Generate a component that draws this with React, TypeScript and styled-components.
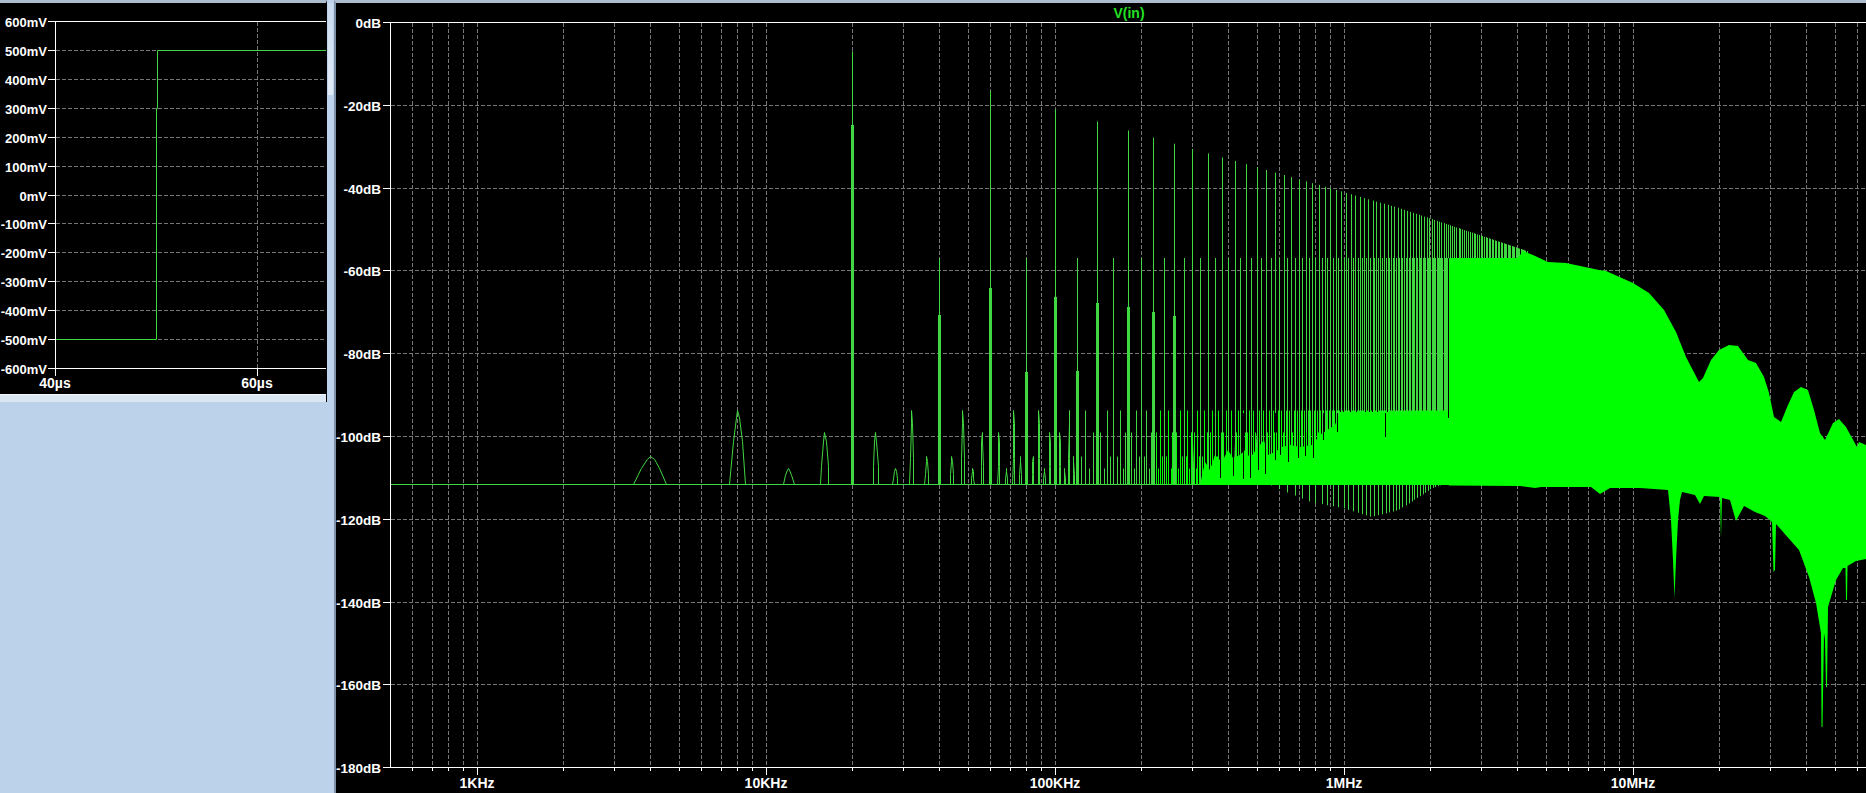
import styled, { createGlobalStyle } from "styled-components";

const GlobalStyle = createGlobalStyle`
  html, body, #root {
    margin: 0;
    height: 100%;
  }
  body {
    overflow: hidden;
    background: #bbd2ea;
  }
`;

const Page = styled.div`
  display: flex;
  height: 793px;
  width: 1866px;
  overflow: hidden;
  background: #bbd2ea;
`;

const LeftColumn = styled.div`
  width: 327px;
  flex: none;
`;

const PlotWindow = styled.div`
  border-top: 3px solid #aebccf;
  border-right: 1px solid #000;
`;

const StatusBand = styled.div`
  height: 7px;
  border-top: 1px solid #f4f8fc;
  background: #dbe6f3;
`;

const Gutter = styled.div`
  width: 7px;
  flex: none;
  background: #bdd3ec;
`;

const GutterThumb = styled.div`
  height: 92px;
  margin-top: 3px;
  margin-left: 1px;
  width: 5px;
  background: linear-gradient(#c9dbf0, #e2ecf7);
`;

const SpectrumWindow = styled.div`
  flex: 1;
  border-top: 3px solid #aebccf;
  border-left: 2px solid #7f91a6;
  background: #000;
`;

const PlotSvg = styled.svg`
  display: block;
  background: #000;
`;

const GridPath = styled.path`
  fill: none;
  stroke: #777;
  stroke-width: 1;
  stroke-dasharray: 4 2;
`;

const AxisPath = styled.path`
  fill: none;
  stroke: #fff;
  stroke-width: 1;
`;

const TracePath = styled.path<{ $bright?: boolean; $width?: number }>`
  fill: none;
  stroke: ${({ $bright }) => ($bright ? "#00ff00" : "#40d840")};
  stroke-width: ${({ $width }) => $width ?? 1};
`;

const FillShape = styled.path`
  fill: #00ff00;
`;

const CutPath = styled.path`
  fill: none;
  stroke: #000;
  stroke-width: 1;
`;

const AxisText = styled.text<{ $anchor?: string; $size?: number }>`
  font-family: "Liberation Sans", Arial, sans-serif;
  font-size: ${({ $size }) => $size ?? 14}px;
  font-weight: 700;
  fill: #fff;
  text-anchor: ${({ $anchor }) => $anchor ?? "end"};
`;

const TraceTitle = styled.text`
  font-family: "Liberation Sans", Arial, sans-serif;
  font-size: 14px;
  font-weight: 700;
  fill: #22e022;
  text-anchor: middle;
`;

// time plot, left window
const mvLabels = [600, 500, 400, 300, 200, 100, 0, -100, -200, -300, -400, -500, -600];
const mvY = [21.5, 50.5, 79.5, 108.5, 137.5, 166.5, 195.5, 223.5, 252.5, 281.5, 310.5, 339.5, 368.5];

const timeGrid =
  mvY.slice(1, -1).map((y) => `M56 ${y}H326`).join("") + "M257.5 22V368";
const timeAxis =
  "M55.5 21.5V376M257.5 368V376" + mvY.map((y) => `M48 ${y}H${y === 21.5 || y === 368.5 ? 326 : 55}`).join("");
const timeTrace = "M56 339.5H156.5V108.5H157.5V50.5H326";

// spectrum plot, right window
const fx = (f: number) => 477 + 289 * Math.log10(f / 1000);
const dbY = (db: number) => Math.floor(22.5 + -db * 4.14) + 0.5;
const snap = (x: number) => Math.round(x - 0.5) + 0.5;

const dbLabels = [0, -20, -40, -60, -80, -100, -120, -140, -160, -180];
const FLOOR = 484.5;

const decades = [1e2, 1e3, 1e4, 1e5, 1e6, 1e7];
const freqs: { f: number; major: boolean }[] = [];
decades.forEach((d) => {
  for (let m = 2; m <= 10; m++) {
    const f = d * m;
    if (f > 500 && f <= 6e7) freqs.push({ f, major: m === 10 });
  }
});

const specGrid =
  dbLabels.slice(1, -1).map((db) => `M391 ${dbY(db)}H1866`).join("") +
  freqs.map(({ f }) => `M${snap(fx(f))} 23V767`).join("");

const specAxis =
  "M390.5 22.5V767.5M383 22.5H1866M383 767.5H1866" +
  dbLabels.map((db) => `M383 ${dbY(db)}H390`).join("") +
  freqs.map(({ f, major }) => `M${snap(fx(f))} 767V${major ? 775 : 771}`).join("");

// level of the small peaks, by 4kHz harmonic number modulo 10
const lowTops: Record<number, number> = {
  1: 456.5, 2: 410.5, 3: 468.5, 4: 432.5, 6: 432.5, 7: 468.5, 8: 410.5, 9: 456.5,
};
// where the main stems get thicker
const shoulders: Record<number, number> = {
  5: 125, 10: 315, 15: 288, 20: 372, 25: 297, 30: 371, 35: 303, 45: 307, 55: 312, 65: 316,
};

const lowerEdge = (x: number) => {
  const pts = [[1270, 485], [1311, 502], [1343, 508], [1372, 517], [1399, 510], [1433, 488], [1442, 485]];
  for (let i = 1; i < pts.length; i++) {
    if (x <= pts[i][0]) {
      const t = (x - pts[i - 1][0]) / (pts[i][0] - pts[i - 1][0]);
      return pts[i - 1][1] + t * (pts[i][1] - pts[i - 1][1]);
    }
  }
  return 485;
};

const roundPeak = [
  [-510, 0], [-437, 0.35], [-194, 0.82], [0, 1], [194, 0.82], [437, 0.35], [510, 0],
];
const slopedPeak = [
  [-510, 0], [-280, 0.58], [-100, 0.9], [0, 1], [100, 0.9], [280, 0.58], [510, 0],
];

const peak = (f: number, top: number, shape = roundPeak) => {
  const h = FLOOR - top;
  return shape.map(([df, a], i) => `${i ? "L" : "M"}${snap(fx(f + df))} ${(FLOOR - h * a).toFixed(1)}`).join("");
};

function buildSpectrum() {
  let main = "M391 484.5H1450";
  let bright = "";
  let thick = "";
  for (let k = 1; k <= 1075; k++) {
    const f = k * 4000;
    const x = fx(f);
    const r = k % 10;
    if (r === 0 || r === 5) {
      if (r === 0 && x > 1449) continue;
      const sh = shoulders[k];
      if (sh) thick += `M${snap(x)} ${FLOOR}V${sh}`;
      else if (r === 5 && x < 1260) main += peak(f, 432.5);
    }
    if (r === 5) {
      const n = k / 5;
      const extra = x > 1398 ? ((x - 1398) / 125) * 1.5 : 0;
      const top = 22.5 + (7 + 20 * Math.log10(n) + extra) * 4.14;
      main += `M${snap(x)} ${FLOOR}V${top.toFixed(1)}`;
    } else if (r === 0) {
      if (x > 1449) continue;
      main += `M${snap(x)} ${FLOOR}V258`;
      if (x > 1270) main += `M${snap(x)} ${FLOOR}V${lowerEdge(x).toFixed(1)}`;
    } else if (x < 1449) {
      if (f < 120000) main += peak(f, lowTops[r], k < 4 ? slopedPeak : roundPeak);
      else if (f < 220000) main += `M${snap(x)} ${FLOOR}V${lowTops[r]}`;
      else bright += `M${snap(x)} ${FLOOR}V${lowTops[r]}`;
    }
  }
  return { main, bright, thick };
}

const spectrum = buildSpectrum();

const toPath = (pts: number[][]) => pts.map(([x, y], i) => `${i ? "L" : "M"}${x} ${y}`).join("") + "Z";

const lowFill = toPath([
  [1200, 485], [1205, 462], [1210, 470], [1215, 455], [1222, 462], [1228, 450], [1233, 458], [1240, 455],
  [1245, 450], [1250, 458], [1258, 447], [1264, 440], [1268, 455], [1275, 452], [1282, 447], [1290, 445],
  [1300, 447], [1312, 445], [1320, 435], [1327, 430], [1335, 425], [1340, 412], [1449, 412], [1449, 485],
]);

const lowCuts = [
  [1220, 478], [1233, 476], [1243, 479], [1250, 478], [1258, 470], [1265, 474], [1275, 460], [1280, 455],
  [1288, 462], [1298, 458], [1305, 456], [1313, 458], [1323, 440], [1337, 432], [1385, 437],
]
  .map(([x, y]) => `M${x + 0.5} 413V${y}`)
  .join("");

const bigFill = toPath([
  [1449, 258], [1518, 258], [1523, 251], [1533, 255], [1548, 262], [1566, 263], [1599, 270], [1606, 271],
  [1633, 283], [1649, 293], [1664, 310], [1676, 332], [1686, 357], [1699, 382], [1703, 378], [1711, 360],
  [1719, 350], [1729, 345], [1738, 346], [1748, 360], [1756, 363], [1764, 377], [1769, 393], [1774, 417],
  [1781, 422], [1788, 405], [1794, 392], [1801, 387], [1808, 390], [1814, 410], [1820, 433], [1825, 440],
  [1833, 423], [1839, 419], [1846, 427], [1857, 447], [1859, 442], [1866, 445],
  [1866, 559], [1856, 561], [1847.5, 566], [1847, 600], [1846, 600], [1845.5, 568], [1843, 568], [1836, 580],
  [1828, 607], [1827, 687], [1826, 687], [1825, 640], [1824, 633], [1822.5, 727], [1821.5, 727], [1821, 633],
  [1816, 603], [1809, 577], [1799, 550], [1776, 524], [1775, 570], [1773.5, 572], [1772, 522], [1765, 516],
  [1755, 512], [1744, 506], [1736, 521], [1730, 500], [1722, 498], [1721, 538], [1720, 497], [1704, 496],
  [1700, 504], [1695, 495], [1682, 492], [1680, 500], [1678, 520], [1676, 560], [1674.5, 598], [1673, 560],
  [1671, 520], [1668, 490], [1640, 488], [1610, 488], [1600, 494], [1591, 487], [1541, 487], [1535, 488],
  [1520, 486], [1449, 485.5],
]);

const freqLabels = [
  { f: 1e3, text: "1KHz" },
  { f: 1e4, text: "10KHz" },
  { f: 1e5, text: "100KHz" },
  { f: 1e6, text: "1MHz" },
  { f: 1e7, text: "10MHz" },
];

function App() {
  return (
    <>
      <GlobalStyle />
      <Page>
        <LeftColumn>
          <PlotWindow>
            <PlotSvg width={326} height={391} viewBox="0 3 326 391">
              <GridPath d={timeGrid} />
              <AxisPath d={timeAxis} />
              <TracePath d={timeTrace} />
              {mvLabels.map((mv, i) => (
                <AxisText key={mv} $size={13} x={47} y={mvY[i] + 5}>
                  {mv}mV
                </AxisText>
              ))}
              <AxisText $anchor="middle" x={55} y={388}>
                40µs
              </AxisText>
              <AxisText $anchor="middle" x={257} y={388}>
                60µs
              </AxisText>
            </PlotSvg>
            <StatusBand />
          </PlotWindow>
        </LeftColumn>
        <Gutter>
          <GutterThumb />
        </Gutter>
        <SpectrumWindow>
          <PlotSvg width={1530} height={790} viewBox="336 3 1530 790">
            <GridPath d={specGrid} />
            <AxisPath d={specAxis} />
            <TracePath $width={3} d={spectrum.thick} />
            <TracePath d={spectrum.main} />
            <TracePath $bright d={spectrum.bright} />
            <FillShape d={lowFill} />
            <FillShape d={bigFill} />
            <CutPath d={lowCuts + "M1448.5 258V418"} />
            <TraceTitle x={1129} y={18}>
              V(in)
            </TraceTitle>
            {dbLabels.map((db) => (
              <AxisText key={db} $size={13.5} x={381} y={dbY(db) + 5}>
                {db}dB
              </AxisText>
            ))}
            {freqLabels.map(({ f, text }) => (
              <AxisText key={text} $anchor="middle" x={fx(f)} y={788}>
                {text}
              </AxisText>
            ))}
          </PlotSvg>
        </SpectrumWindow>
      </Page>
    </>
  );
}

export default App;
